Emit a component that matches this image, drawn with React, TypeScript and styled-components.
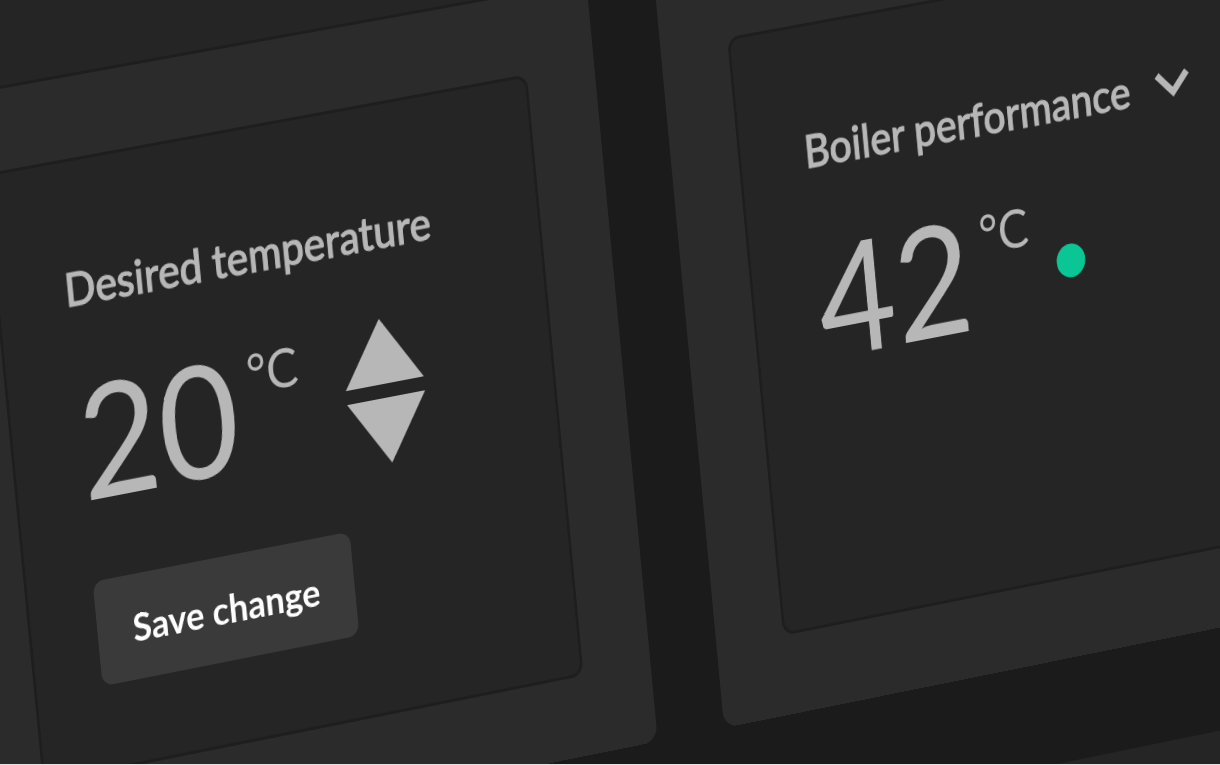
import React, { useState } from "react";
import styled, { createGlobalStyle } from "styled-components";

const GlobalStyle = createGlobalStyle`
  * { box-sizing: border-box; }
  html, body { margin: 0; background: #1b1b1b; }
  body { font-family: Lato, "Open Sans", sans-serif; color: #b7b7b7; }
`;

const Scene = styled.main`
  height: 100vh;
  overflow: hidden;
  border-bottom: 1px solid #e4e4e4;
  background: #1b1b1b;
`;

/* The dashboard is a flat grid, seen from an angle. */
const Board = styled.div`
  display: grid;
  grid-template-columns: repeat(2, max-content);
  column-gap: 78px;
  row-gap: 104px;
  width: max-content;
  transform-origin: 0 0;
  transform:
    matrix3d(0.88515, -0.15858, 0, 0.000023575, 0.09754, 1.00987, 0, 0.00000417, 0, 0, 1, 0, -16, 174, 0, 1)
    translate(-78px, -560px);
`;

const Card = styled.section`
  display: flex;
  flex-direction: column;
  gap: 80px;
  padding: 80px 78px;
  border-radius: 16px;
  background: #2b2b2b;
`;

const Footer = styled.footer`
  grid-column: 1 / -1;
  min-height: 400px;
  border-radius: 16px;
  background: #252525;
`;

const Panel = styled.div`
  width: 622px;
  min-height: 400px;
  padding: 97px 72px 81px 74px;
  border: 3px solid #1e1e1e;
  border-radius: 14px;
  background: #252525;
`;

const WidgetPanel = styled(Panel)`
  display: flex;
  flex: 1;
  flex-direction: column;
  align-items: flex-start;
`;

const Title = styled.h2`
  margin: 0 0 42px;
  font-size: 46px;
  font-weight: 500;
  line-height: 56px;
  white-space: nowrap;
  -webkit-text-stroke: 1px currentColor;
`;

const TitleButton = styled.button`
  display: flex;
  align-items: center;
  gap: 30px;
  padding: 0;
  border: 0;
  background: none;
  color: inherit;
  font: inherit;
  cursor: pointer;
`;

const Reading = styled.div`
  display: flex;
  align-items: flex-start;
`;

const Value = styled.output`
  font-size: 156px;
  line-height: 160px;
`;

const Unit = styled.span`
  padding: 14px 0 0 14px;
  font-size: 54px;
  line-height: 64px;
`;

const Stepper = styled.div`
  display: flex;
  flex-direction: column;
  gap: 14px;
  margin: 16px 0 0 52px;
`;

const StepButton = styled.button`
  display: block;
  padding: 0;
  border: 0;
  background: none;
  color: inherit;
  cursor: pointer;

  svg { display: block; }
`;

const StatusDot = styled.span`
  width: 34px;
  height: 34px;
  margin: 72px 0 0 30px;
  border-radius: 50%;
  background: #0ac594;
`;

const SaveButton = styled.button`
  height: 104px;
  margin-top: 60px;
  padding: 0 40px;
  border: 0;
  border-radius: 12px;
  background: #3a3a3a;
  color: #fff;
  font: 700 39px/48px Lato, "Open Sans", sans-serif;
  white-space: nowrap;
  cursor: pointer;
`;

export default function App() {
  const [target, setTarget] = useState(20);

  return (
    <>
      <GlobalStyle />
      <Scene>
        <Board>
          <Card>
            <Panel />
            <WidgetPanel>
              <Title>Desired temperature</Title>
              <Reading>
                <Value>{target}</Value>
                <Unit>°C</Unit>
                <Stepper>
                  <StepButton aria-label="Increase" onClick={() => setTarget(target + 1)}>
                    <svg width="90" height="65" viewBox="0 0 90 65" fill="currentColor">
                      <path d="M45 0 90 65H0Z" />
                    </svg>
                  </StepButton>
                  <StepButton aria-label="Decrease" onClick={() => setTarget(target - 1)}>
                    <svg width="90" height="65" viewBox="0 0 90 65" fill="currentColor">
                      <path d="M0 0H90L45 65Z" />
                    </svg>
                  </StepButton>
                </Stepper>
              </Reading>
              <SaveButton>Save change</SaveButton>
            </WidgetPanel>
          </Card>
          <Card>
            <Panel />
            <WidgetPanel>
              <Title>
                <TitleButton>
                  Boiler performance
                  <svg width="42" height="36" viewBox="0 0 42 36" fill="none" stroke="currentColor" strokeWidth="7">
                    <path d="M3 8 21 27 39 8" />
                  </svg>
                </TitleButton>
              </Title>
              <Reading>
                <Value>42</Value>
                <Unit>°C</Unit>
                <StatusDot />
              </Reading>
            </WidgetPanel>
          </Card>
          <Footer />
        </Board>
      </Scene>
    </>
  );
}
